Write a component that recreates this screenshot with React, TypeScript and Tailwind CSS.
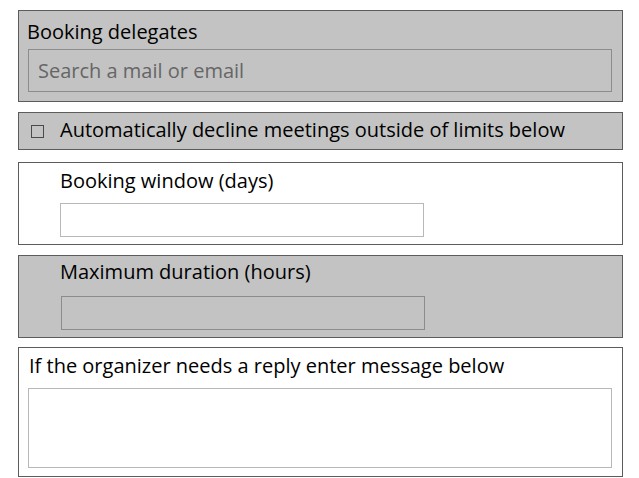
import React from "react";

const font = { fontFamily: '"Open Sans", "Noto Sans", sans-serif' };

export default function App() {
  return (
    <div className="w-[639px] h-[478px] bg-white overflow-hidden relative text-black" style={font}>
      <div className="flex flex-col pl-[18px] pt-[10px] w-[623px]">
        {/* Panel 1 */}
        <div className="h-[92px] border border-[#5c5c5c] bg-[#c3c3c3] flex flex-col">
          <div className="pl-[8px] pt-[7px] text-[20px] leading-[27px]">Booking delegates</div>
          <div className="ml-[9px] mr-[10px] mt-[4px] h-[43px] border border-[#8c8c8c] flex items-center pl-[9px] text-[20px] text-[#666666]">
            Search a mail or email
          </div>
        </div>
        {/* Panel 2 */}
        <div className="mt-[10px] h-[38px] border border-[#5c5c5c] bg-[#c3c3c3] flex items-start">
          <div className="ml-[12px] mt-[12px] w-[13px] h-[13px] border border-[#4a4a4a]" />
          <div className="ml-[16px] mt-[3px] text-[20px] leading-[27px]">Automatically decline meetings outside of limits below</div>
        </div>
        {/* Panel 3 */}
        <div className="mt-[12px] h-[83px] border border-[#5c5c5c] bg-white flex flex-col">
          <div className="pl-[41px] pt-[4px] text-[20px] leading-[27px]">Booking window (days)</div>
          <div className="ml-[41px] mt-[9px] w-[364px] h-[34px] border border-[#b8b8b8]" />
        </div>
        {/* Panel 4 */}
        <div className="mt-[10px] h-[83px] border border-[#5c5c5c] bg-[#c3c3c3] flex flex-col">
          <div className="pl-[41px] pt-[2px] text-[20px] leading-[27px]">Maximum duration (hours)</div>
          <div className="ml-[42px] mt-[11px] w-[364px] h-[34px] border border-[#8c8c8c]" />
        </div>
        {/* Panel 5 */}
        <div className="mt-[9px] h-[130px] border border-[#5c5c5c] bg-white flex flex-col">
          <div className="pl-[10px] pt-[4px] text-[20px] leading-[27px]">If the organizer needs a reply enter message below</div>
          <div className="ml-[9px] mr-[10px] mt-[9px] h-[80px] border border-[#b8b8b8]" />
        </div>
      </div>
    </div>
  );
}
